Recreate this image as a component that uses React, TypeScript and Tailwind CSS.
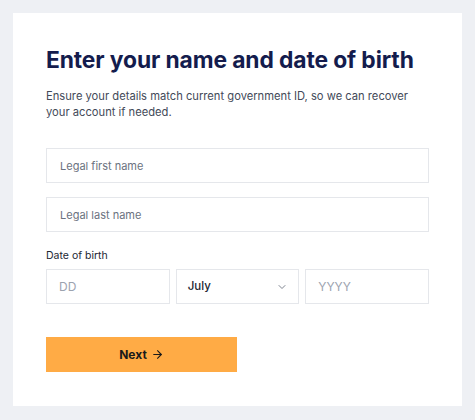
import { ChevronDown, ArrowRight } from "lucide-react"

function TextField({ placeholder }: { placeholder: string }) {
  return (
    <input
      type="text"
      placeholder={placeholder}
      className="h-[35px] w-full border border-[#e5e7eb] bg-white px-[13px] text-[11px] text-[#111827] placeholder:text-[#6b7280] outline-none"
    />
  )
}

export default function App() {
  return (
    <div
      className="min-h-[420px] bg-[#eef0f4] p-[13px]"
      style={{ fontFamily: "Inter, 'Noto Sans', sans-serif" }}
    >
      <div className="flex flex-col bg-white px-[33px] pt-[32px] pb-[34px]">
        <h1 className="text-[22.8px] font-bold leading-[30px] tracking-[-0.1px] text-[#141c4d]">
          Enter your name and date of birth
        </h1>
        <p className="mt-[13px] text-[11.2px] leading-[16px] text-[#434a59]">
          Ensure your details match current government ID, so we can recover your account if needed.
        </p>

        <div className="mt-[28px] flex flex-col gap-[14px]">
          <TextField placeholder="Legal first name" />
          <TextField placeholder="Legal last name" />
        </div>

        <label className="mt-[17px] text-[10.5px] leading-[14px] text-[#222633]">Date of birth</label>
        <div className="mt-[6px] grid grid-cols-3 gap-[6px]">
          <input
            type="text"
            placeholder="DD"
            className="h-[35px] w-full border border-[#e5e7eb] px-[12px] text-[12px] placeholder:text-[#9ca3af] outline-none"
          />
          <div className="flex h-[35px] items-center justify-between border border-[#e5e7eb] pl-[11px] pr-[10px]">
            <span className="text-[11.5px] font-medium text-[#222633]">July</span>
            <ChevronDown className="h-[12px] w-[12px] text-[#6b7280]" strokeWidth={1.75} />
          </div>
          <input
            type="text"
            placeholder="YYYY"
            className="h-[35px] w-full border border-[#e5e7eb] px-[12px] text-[12px] placeholder:text-[#9ca3af] outline-none"
          />
        </div>

        <button className="mt-[33px] flex h-[35px] w-[191px] items-center justify-center gap-[4px] bg-[#ffab45] text-[12px] font-bold text-[#1a1a1a]">
          Next
          <ArrowRight className="h-[13px] w-[13px]" strokeWidth={2} />
        </button>
      </div>
    </div>
  )
}
